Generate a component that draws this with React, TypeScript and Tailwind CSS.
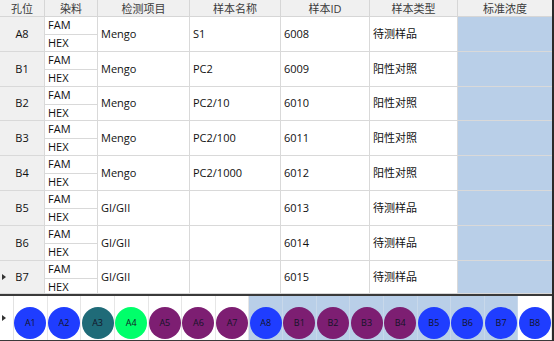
import React from "react";

const cols = [45, 53, 92, 91, 89, 88, 94];
const headers = ["孔位", "染料", "检测项目", "样本名称", "样本ID", "样本类型", "标准浓度"];

type Row = { well: string; item: string; name: string; id: string; type: string; h: number; mark?: boolean };

const rows: Row[] = [
  { well: "A8", item: "Mengo", name: "S1", id: "6008", type: "待测样品", h: 35 },
  { well: "B1", item: "Mengo", name: "PC2", id: "6009", type: "阳性对照", h: 35 },
  { well: "B2", item: "Mengo", name: "PC2/10", id: "6010", type: "阳性对照", h: 34 },
  { well: "B3", item: "Mengo", name: "PC2/100", id: "6011", type: "阳性对照", h: 35 },
  { well: "B4", item: "Mengo", name: "PC2/1000", id: "6012", type: "阳性对照", h: 35 },
  { well: "B5", item: "GI/GII", name: "", id: "6013", type: "待测样品", h: 35 },
  { well: "B6", item: "GI/GII", name: "", id: "6014", type: "待测样品", h: 35 },
  { well: "B7", item: "GI/GII", name: "", id: "6015", type: "待测样品", h: 33, mark: true },
];

const wells: { label: string; color: string; sel: boolean }[] = [
  { label: "A1", color: "#1f3dff", sel: false },
  { label: "A2", color: "#1f3dff", sel: false },
  { label: "A3", color: "#1f6b78", sel: false },
  { label: "A4", color: "#00ff6a", sel: false },
  { label: "A5", color: "#7d1e72", sel: false },
  { label: "A6", color: "#7d1e72", sel: false },
  { label: "A7", color: "#7d1e72", sel: false },
  { label: "A8", color: "#1f3dff", sel: true },
  { label: "B1", color: "#7d1e72", sel: true },
  { label: "B2", color: "#7d1e72", sel: true },
  { label: "B3", color: "#7d1e72", sel: true },
  { label: "B4", color: "#7d1e72", sel: true },
  { label: "B5", color: "#1f3dff", sel: true },
  { label: "B6", color: "#1f3dff", sel: true },
  { label: "B7", color: "#1f3dff", sel: true },
  { label: "B8", color: "#1f3dff", sel: false },
];

const Tri = () => (
  <svg width="4" height="6" viewBox="0 0 4 6" className="absolute left-[2px] top-1/2 -translate-y-1/2">
    <path d="M0 0 L4 3 L0 6 Z" fill="#333" />
  </svg>
);

export default function App() {
  return (
    <div
      className="w-[554px] h-[341px] bg-white overflow-hidden flex text-[11px] text-[#111]"
      style={{ fontFamily: '"Open Sans", "Noto Sans CJK SC", sans-serif' }}
    >
      <div className="w-[552px] flex flex-col">
        {/* header */}
        <div className="flex h-[17px] bg-[#f0f0f0] border-b border-[#d6d6d6]">
          {headers.map((h, i) => (
            <div
              key={h}
              style={{ width: cols[i] }}
              className={`flex items-center justify-center text-[#3a3a3a] leading-none ${i < 6 ? "border-r border-[#d6d6d6]" : ""}`}
            >
              {h}
            </div>
          ))}
        </div>
        {/* rows */}
        {rows.map((r) => (
          <div key={r.well} className="flex border-b border-[#d9d9d9]" style={{ height: r.h }}>
            <div className="relative w-[45px] bg-[#f0f0f0] border-r border-[#d9d9d9] flex items-center justify-center">
              {r.mark && <Tri />}
              {r.well}
            </div>
            <div className="w-[53px] flex flex-col border-r border-[#d9d9d9]">
              <div className="flex-1 flex items-center pl-[3px] border-b border-[#d9d9d9]">FAM</div>
              <div className="flex-1 flex items-center pl-[3px]">HEX</div>
            </div>
            <div className="w-[92px] flex items-center pl-[3px] border-r border-[#d9d9d9]">{r.item}</div>
            <div className="w-[91px] flex items-center pl-[3px] border-r border-[#d9d9d9]">{r.name}</div>
            <div className="w-[89px] flex items-center pl-[3px] border-r border-[#d9d9d9]">{r.id}</div>
            <div className="w-[88px] flex items-center pl-[3px] border-r border-[#d9d9d9]">{r.type}</div>
            <div className="w-[94px] bg-[#b9cfe8]"></div>
          </div>
        ))}
        {/* well panel */}
        <div className="flex-1 flex border-t-2 border-b border-[#3a3a3a]">
          <div className="relative w-[14px] border-r border-[#e2e2e2]">
            <Tri />
          </div>
          {wells.map((w) => (
            <div
              key={w.label}
              className={`flex-1 flex items-end justify-center pb-[1px] border-r ${w.sel ? "bg-[#b9cfe8] border-[#c8d8ea]" : "bg-white border-[#e6e6e6]"}`}
            >
              <div
                className="w-[32px] h-[32px] rounded-full flex items-center justify-center text-[9px] text-[#141428]"
                style={{ backgroundColor: w.color }}
              >
                {w.label}
              </div>
            </div>
          ))}
        </div>
      </div>
      <div className="w-[2px] bg-[#2a2a2a]"></div>
    </div>
  );
}
